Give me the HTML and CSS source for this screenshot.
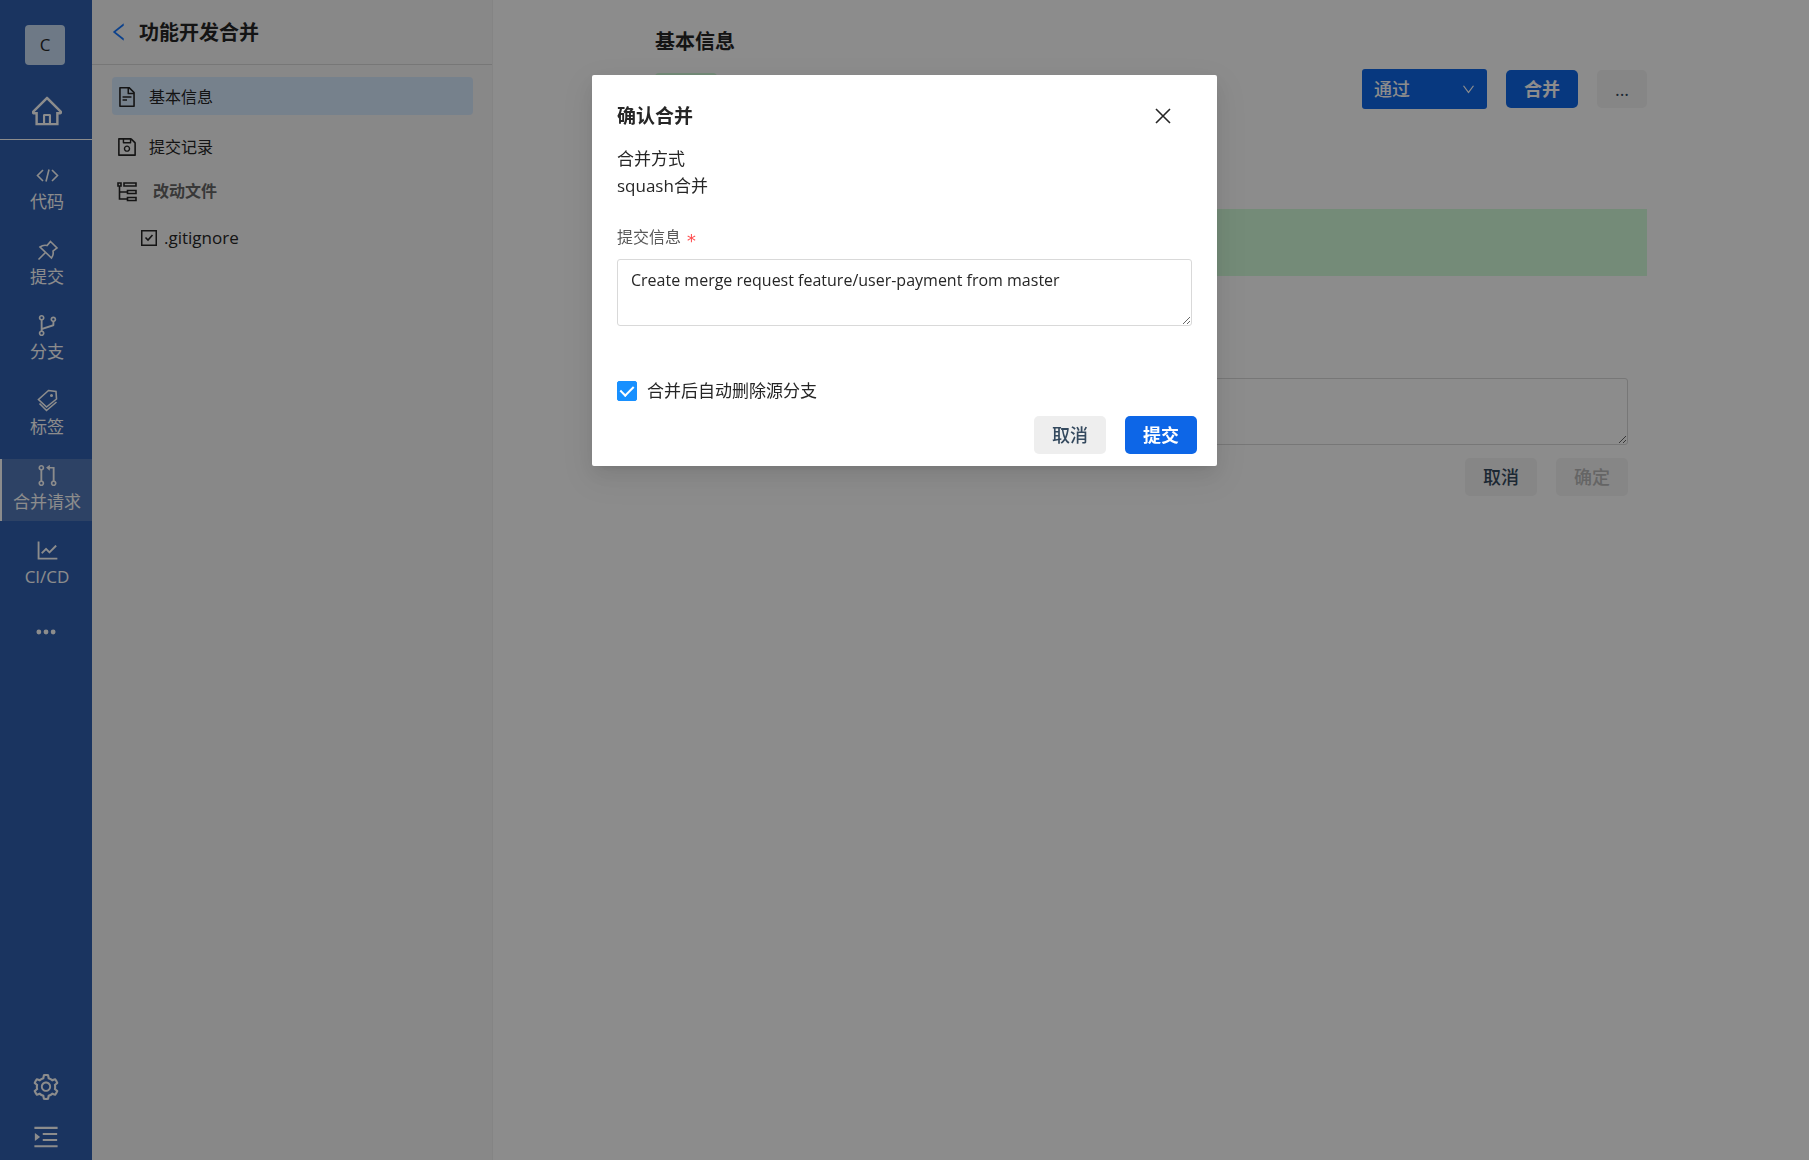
FILE: index.html
```
<!DOCTYPE html>
<html lang="zh-CN">

<head>
    <meta charset="UTF-8" />
    <meta name="viewport" content="width=device-width, initial-scale=1.0" />
    <title>功能开发合并</title>
    <link rel="stylesheet" href="styles.css">
</head>

<body>
    <div class="layout">
        <nav class="sidebar">
            <a href="#" class="avatar">C</a>
            <a href="#" class="home" aria-label="首页">
                <svg class="icon icon-home" viewBox="64 64 896 896"><path d="M946.5 505L560.1 118.8l-25.9-25.9a31.5 31.5 0 00-44.4 0L77.5 505a63.9 63.9 0 00-18.8 46c.4 35.2 29.7 63.3 64.9 63.3h42.5V940h691.8V614.3h43.4c17.1 0 33.2-6.7 45.3-18.8a63.6 63.6 0 0018.7-45.3c0-17-6.7-33.1-18.8-45.2zM568 868H456V664h112v204zm217.9-325.7V868H632V640c0-22.1-17.9-40-40-40H432c-22.1 0-40 17.9-40 40v228H238.1V542.3h-96l370-369.7 23.1 23.1L882 542.3h-96.1z" /></svg>
            </a>
            <div class="nav-list">
                <a href="#" class="nav-item">
                    <svg class="icon icon-nav line" viewBox="0 0 23 23"><path d="M7 6L1.5 11.5 7 17M16 6l5.5 5.5L16 17M13 5.5L10 17.5" /></svg>
                    <span>代码</span>
                </a>
                <a href="#" class="nav-item">
                    <svg class="icon icon-nav line" viewBox="0 0 23 23"><path d="M14.5 2.500l6.500 6.500-4 3c.5 2.500 0 5-1.500 7L4 8c2-1.500 4.500-2 7-1.500zM9.500 13.500l-7 7" /></svg>
                    <span>提交</span>
                </a>
                <a href="#" class="nav-item">
                    <svg class="icon icon-nav" viewBox="64 64 896 896"><path d="M740 161c-61.800 0-112 50.200-112 112 0 50.100 33.100 92.600 78.500 106.900v95.900L320 602.400V318.100c44.200-15 76-56.900 76-106.100 0-61.800-50.200-112-112-112s-112 50.200-112 112c0 49.200 31.800 91 76 106.100V706c-44.200 15-76 56.900-76 106.100 0 61.800 50.200 112 112 112s112-50.200 112-112c0-49.200-31.800-91-76-106.100v-27.800l423.500-138.700a50.520 50.520 0 0034.900-48.200V378.200c42.900-15.800 73.600-57 73.600-105.200 0-61.800-50.200-112-112-112zm-504 51a48.010 48.010 0 0196 0 48.010 48.010 0 01-96 0zm96 600a48.010 48.010 0 01-96 0 48.010 48.010 0 0196 0zm408-491a48.010 48.010 0 010-96 48.010 48.010 0 010 96z" /></svg>
                    <span>分支</span>
                </a>
                <a href="#" class="nav-item">
                    <svg class="icon icon-nav line" viewBox="0 0 23 23"><path d="M12.5 1.500l7.500 1 .5 7.500L10.500 18 2.500 10.500zM3.500 14.500l7 7L20.500 13" /><circle cx="15.5" cy="6.5" r=".7" /></svg>
                    <span>标签</span>
                </a>
                <a href="#" class="nav-item active">
                    <svg class="icon icon-nav" viewBox="64 64 896 896"><path d="M788 705.900V192c0-8.800-7.200-16-16-16H602v-68.800c0-6-7-9.400-11.700-5.700L462.700 202.300a7.140 7.140 0 000 11.300l127.600 100.800c4.700 3.700 11.700.4 11.700-5.700V240h114v465.900c-44.200 15-76 56.900-76 106.100 0 61.800 50.200 112 112 112s112-50.200 112-112c.1-49.200-31.700-91-75.900-106.100zM752 860a48.010 48.010 0 010-96 48.010 48.010 0 010 96zM384 212c0-61.800-50.200-112-112-112s-112 50.200-112 112c0 49.200 31.800 91 76 106.100V706c-44.200 15-76 56.900-76 106.100 0 61.800 50.200 112 112 112s112-50.200 112-112c0-49.200-31.800-91-76-106.100V318.100c44.200-15.100 76-56.900 76-106.100zm-160 0a48.010 48.010 0 0196 0 48.010 48.010 0 01-96 0zm96 600a48.010 48.010 0 01-96 0 48.010 48.010 0 0196 0z" /></svg>
                    <span>合并请求</span>
                </a>
                <a href="#" class="nav-item">
                    <svg class="icon icon-nav" viewBox="64 64 896 896"><path d="M888 792H200V168c0-4.400-3.600-8-8-8h-56c-4.400 0-8 3.600-8 8v688c0 4.400 3.600 8 8 8h752c4.400 0 8-3.600 8-8v-56c0-4.400-3.600-8-8-8zM305.800 637.700c3.100 3.100 8.100 3.100 11.300 0l138.300-137.600L583 628.500c3.100 3.100 8.200 3.100 11.300 0l275.400-275.300c3.100-3.100 3.100-8.200 0-11.300l-39.600-39.600a8.030 8.030 0 00-11.300 0l-230 229.900L461.400 404a8.030 8.030 0 00-11.300 0L266.300 586.700a8.030 8.030 0 000 11.300l39.500 39.700z" /></svg>
                    <span>CI/CD</span>
                </a>
            </div>
            <button type="button" class="icon-btn more" aria-label="更多">
                <svg class="icon icon-more" viewBox="64 64 896 896"><circle cx="192" cy="512" r="108" /><circle cx="512" cy="512" r="108" /><circle cx="832" cy="512" r="108" /></svg>
            </button>
            <div class="sidebar-bottom">
                <button type="button" class="icon-btn" aria-label="设置">
                    <svg class="icon icon-tool" viewBox="64 64 896 896"><path d="M924.800 625.700l-65.500-56c3.100-19 4.700-38.400 4.700-57.800s-1.600-38.800-4.700-57.800l65.500-56a32.030 32.030 0 009.300-35.200l-.9-2.600a443.740 443.740 0 00-79.700-137.900l-1.800-2.100a32.120 32.120 0 00-35.100-9.500l-81.300 28.900c-30-24.600-63.500-44-99.700-57.600l-15.700-85a32.050 32.050 0 00-25.800-25.700l-2.700-.5c-52.100-9.400-106.900-9.400-159 0l-2.700.5a32.050 32.050 0 00-25.800 25.700l-15.800 85.400a351.860 351.860 0 00-99 57.400l-81.900-29.100a32 32 0 00-35.100 9.500l-1.800 2.100a446.020 446.020 0 00-79.700 137.900l-.9 2.600c-4.500 12.500-.8 26.500 9.300 35.200l66.300 56.600c-3.100 18.800-4.600 38-4.600 57.100 0 19.200 1.500 38.400 4.600 57.100L99 625.500a32.030 32.030 0 00-9.300 35.200l.9 2.600c18.100 50.400 44.900 96.900 79.700 137.900l1.800 2.100a32.120 32.120 0 0035.100 9.500l81.900-29.100c29.800 24.500 63.100 43.900 99 57.400l15.800 85.400a32.050 32.050 0 0025.800 25.700l2.700.5a449.400 449.400 0 00159 0l2.700-.5a32.050 32.050 0 0025.800-25.700l15.700-85a350 350 0 0099.700-57.600l81.300 28.900a32 32 0 0035.100-9.500l1.800-2.100c34.800-41.100 61.600-87.500 79.700-137.900l.9-2.600c4.500-12.300.8-26.300-9.300-35zM788.300 465.900c2.500 15.100 3.800 30.600 3.800 46.100s-1.300 31-3.800 46.100l-6.600 40.100 74.700 63.900a370.030 370.030 0 01-42.600 73.600L721 702.800l-31.400 25.800c-23.900 19.600-50.500 35-79.300 45.800l-38.100 14.300-17.900 97a377.500 377.500 0 01-85 0l-17.900-97.200-37.800-14.500c-28.500-10.800-55-26.200-78.700-45.700l-31.400-25.900-93.400 33.200c-17-22.900-31.200-47.600-42.600-73.600l75.500-64.500-6.500-40c-2.400-14.900-3.700-30.300-3.700-45.500 0-15.300 1.200-30.600 3.700-45.500l6.500-40-75.500-64.500c11.300-26.100 25.600-50.700 42.600-73.600l93.400 33.200 31.400-25.900c23.700-19.500 50.200-34.900 78.700-45.700l37.900-14.300 17.900-97.200c28.100-3.200 56.800-3.200 85 0l17.900 97 38.100 14.300c28.700 10.800 55.400 26.200 79.300 45.800l31.400 25.800 92.800-32.900c17 22.900 31.200 47.600 42.600 73.600L781.800 426l6.500 39.900zM512 326c-97.200 0-176 78.800-176 176s78.800 176 176 176 176-78.800 176-176-78.800-176-176-176zm79.200 255.200A111.600 111.600 0 01512 614c-29.900 0-58-11.700-79.200-32.800A111.600 111.600 0 01400 502c0-29.900 11.700-58 32.800-79.200C454 401.600 482.100 390 512 390c29.900 0 58 11.600 79.200 32.800A111.600 111.600 0 01624 502c0 29.900-11.700 58-32.800 79.200z" /></svg>
                </button>
                <button type="button" class="icon-btn" aria-label="展开菜单">
                    <svg class="icon icon-tool" viewBox="64 64 896 896"><path d="M408 442h480c4.400 0 8-3.600 8-8v-56c0-4.400-3.600-8-8-8H408c-4.400 0-8 3.600-8 8v56c0 4.400 3.600 8 8 8zm-8 204c0 4.400 3.600 8 8 8h480c4.400 0 8-3.600 8-8v-56c0-4.400-3.600-8-8-8H408c-4.400 0-8 3.600-8 8v56zm504-486H120c-4.400 0-8 3.600-8 8v56c0 4.400 3.600 8 8 8h784c4.400 0 8-3.600 8-8v-56c0-4.400-3.600-8-8-8zm0 632H120c-4.400 0-8 3.600-8 8v56c0 4.400 3.600 8 8 8h784c4.400 0 8-3.600 8-8v-56c0-4.400-3.600-8-8-8zM142.400 642.100L298.700 519a8.840 8.840 0 000-13.900L142.400 381.900c-5.800-4.600-14.400-.5-14.400 6.900v246.300a8.900 8.900 0 0014.400 7z" /></svg>
                </button>
            </div>
        </nav>

        <aside class="panel">
            <header class="panel-header">
                <a href="#" class="back" aria-label="返回">
                    <svg class="icon icon-menu" viewBox="64 64 896 896"><path d="M724 218.300V141c0-6.700-7.700-10.400-12.900-6.300L260.300 486.800a31.860 31.860 0 000 50.300l450.800 352.100c5.300 4.100 12.900.4 12.900-6.300v-77.300c0-4.900-2.300-9.600-6.100-12.600l-360-281 360-281.100c3.800-3 6.100-7.700 6.100-12.600z" /></svg>
                </a>
                <h1>功能开发合并</h1>
            </header>
            <div class="menu">
                <a href="#" class="menu-item selected">
                    <svg class="icon icon-menu" viewBox="64 64 896 896"><path d="M854.600 288.600L639.400 73.400c-6-6-14.100-9.400-22.600-9.400H192c-17.700 0-32 14.300-32 32v832c0 17.700 14.300 32 32 32h640c17.700 0 32-14.300 32-32V311.300c0-8.500-3.400-16.700-9.400-22.700zM790.200 326H602V137.800L790.200 326zm1.800 562H232V136h302v216a42 42 0 0042 42h216v494zM504 618H320c-4.400 0-8 3.600-8 8v48c0 4.400 3.600 8 8 8h184c4.400 0 8-3.600 8-8v-48c0-4.400-3.600-8-8-8zM312 490v48c0 4.400 3.600 8 8 8h384c4.400 0 8-3.600 8-8v-48c0-4.400-3.600-8-8-8H320c-4.400 0-8 3.600-8 8z" /></svg>
                    基本信息
                </a>
                <a href="#" class="menu-item">
                    <svg class="icon icon-menu" viewBox="64 64 896 896"><path d="M893.300 293.300L730.700 130.700c-7.500-7.500-16.700-13-26.700-16V112H144c-17.700 0-32 14.300-32 32v736c0 17.700 14.300 32 32 32h736c17.700 0 32-14.300 32-32V338.500c0-17-6.700-33.200-18.700-45.200zM384 184h256v104H384V184zm456 656H184V184h136v136c0 17.700 14.300 32 32 32h320c17.700 0 32-14.300 32-32V205.800l136 136V840zM512 442c-79.500 0-144 64.500-144 144s64.500 144 144 144 144-64.500 144-144-64.500-144-144-144zm0 224c-44.200 0-80-35.800-80-80s35.800-80 80-80 80 35.800 80 80-35.800 80-80 80z" /></svg>
                    提交记录
                </a>
            </div>
            <section class="files">
                <h2>
                    <svg class="icon icon-menu line" viewBox="0 0 20 20"><path d="M1 1h3v3H1zM7 1h12v3H7zM10.500 8.500H19v3h-8.500zM10.500 15.500H19v3h-8.500zM2.500 4v13h8M2.500 10h8" /></svg>
                    改动文件
                </h2>
                <a href="#" class="file">
                    <svg class="icon icon-file line" viewBox="0 0 16 16"><path d="M.7.7h14.600v14.600H.7zM4.500 7.500l2.500 2.500L11.500 5" /></svg>
                    .gitignore
                </a>
            </section>
        </aside>

        <main class="content">
            <h2 class="content-title">基本信息</h2>
            <div class="content-head">
                <span class="state"></span>
                <div class="actions">
                    <div class="review">
                        <select aria-label="评审结果">
                            <option>通过</option>
                        </select>
                        <svg class="icon icon-down" viewBox="64 64 896 896"><path d="M884 256h-75c-5.100 0-9.900 2.500-12.900 6.600L512 654.200 227.900 262.600c-3-4.100-7.800-6.600-12.900-6.600h-75c-6.500 0-10.300 7.400-6.500 12.700l352.600 486.100c12.800 17.600 39 17.600 51.700 0l352.600-486.100c3.900-5.300.1-12.700-6.400-12.700z" /></svg>
                    </div>
                    <button type="button" class="btn primary">合并</button>
                    <button type="button" class="btn small">...</button>
                </div>
            </div>
            <div class="banner"></div>
            <form class="comment">
                <textarea aria-label="评论"></textarea>
                <div class="actions">
                    <button type="button" class="btn">取消</button>
                    <button type="submit" class="btn" disabled>确定</button>
                </div>
            </form>
        </main>
    </div>

    <div class="mask">
        <div class="modal" role="dialog" aria-modal="true" aria-labelledby="modalTitle">
            <header class="modal-header">
                <h2 id="modalTitle">确认合并</h2>
                <button type="button" class="close" aria-label="关闭">
                    <svg class="icon icon-close line" viewBox="0 0 16 16"><path d="M1 1l14 14M15 1L1 15" /></svg>
                </button>
            </header>
            <form class="modal-form">
                <p>合并方式</p>
                <p>squash合并</p>
                <label class="field-label" for="commitMessage">提交信息 <span class="required">*</span></label>
                <textarea id="commitMessage">Create merge request feature/user-payment from master</textarea>
                <label class="check">
                    <input type="checkbox" checked />
                    合并后自动删除源分支
                </label>
                <div class="modal-footer">
                    <button type="button" class="btn">取消</button>
                    <button type="submit" class="btn primary">提交</button>
                </div>
            </form>
        </div>
    </div>
</body>

</html>
```

FILE: styles.css
```
* {
    box-sizing: border-box;
}

body {
    margin: 0;
    font-family: "Open Sans", "Noto Sans CJK SC", sans-serif;
    font-size: 17px;
    line-height: 27px;
    color: #262626;
    background: #fff;
}

h1,
h2,
p {
    margin: 0;
}

a {
    color: inherit;
    text-decoration: none;
}

button,
select,
textarea {
    font: inherit;
    color: inherit;
}

button {
    border: none;
    cursor: pointer;
}

.icon {
    display: block;
    flex: none;
    fill: currentColor;
}

.icon.line {
    fill: none;
    stroke: currentColor;
    stroke-width: 1.6;
}

.icon-home {
    width: 30px;
    height: 30px;
}

.icon-nav {
    width: 23px;
    height: 23px;
}

.icon-tool {
    width: 26px;
    height: 26px;
}

.icon-more,
.icon-menu {
    width: 20px;
    height: 20px;
}

.icon-file,
.icon-close {
    width: 16px;
    height: 16px;
}

.icon-down {
    width: 13px;
    height: 13px;
}

.layout {
    display: flex;
    min-height: 100vh;
}

/* 左侧导航 */
.sidebar {
    display: flex;
    flex-direction: column;
    width: 92px;
    padding: 25px 0 10px;
    background: #3160b0;
    color: #fff;
}

.avatar {
    width: 40px;
    height: 40px;
    margin: 0 25px;
    line-height: 40px;
    text-align: center;
    background: #c9ddf5;
    color: #262626;
    border-radius: 4px;
}

.home {
    display: flex;
    justify-content: center;
    padding: 31px 0 13px 2px;
    border-bottom: 1px solid #fff;
}

.nav-list {
    display: flex;
    flex-direction: column;
    gap: 13px;
    padding-top: 19px;
}

.nav-item {
    display: flex;
    flex-direction: column;
    align-items: center;
    gap: 1px;
    height: 62px;
    padding: 5px 0;
    border-left: 2px solid transparent;
}

.nav-item.active {
    background: #5278b9;
    border-color: #fff;
}

.icon-btn {
    padding: 0;
    background: none;
    color: inherit;
}

.more {
    margin: 26px 36px 0;
}

.sidebar-bottom {
    display: flex;
    flex-direction: column;
    align-items: center;
    gap: 24px;
    margin-top: auto;
}

/* 合并请求菜单 */
.panel {
    width: 401px;
    background: #f7f7f7;
    border-right: 1px solid #f0f0f0;
}

.panel-header {
    display: flex;
    align-items: center;
    gap: 10px;
    height: 65px;
    padding-left: 17px;
    border-bottom: 1px solid #d9d9d9;
}

.panel-header h1,
.content-title {
    font-size: 20px;
    font-weight: 700;
}

.back {
    color: #1677ff;
}

.menu {
    display: flex;
    flex-direction: column;
    gap: 12px;
    padding: 12px 19px 0 20px;
}

.menu-item {
    display: flex;
    align-items: center;
    gap: 12px;
    height: 38px;
    padding: 2px 5px 0;
    font-size: 16px;
    border-radius: 4px;
}

.menu-item.selected {
    background: #d8ebff;
}

.files {
    padding: 13px 25px;
}

.files h2 {
    display: flex;
    align-items: center;
    gap: 16px;
    font-size: 16px;
    color: #666;
}

.files h2 .icon {
    color: #262626;
}

.file {
    display: flex;
    align-items: center;
    gap: 7px;
    padding: 19px 24px;
}

/* 主内容 */
.content {
    flex: 1;
    padding: 28px 162px;
}

.content-head {
    display: flex;
    justify-content: space-between;
    align-items: flex-start;
    padding-top: 14px;
}

.state {
    width: 62px;
    height: 30px;
    margin-top: 4px;
    background: #d3fdda;
    border-radius: 4px;
}

.actions {
    display: flex;
    align-items: center;
    justify-content: flex-end;
    gap: 19px;
}

.btn {
    width: 72px;
    height: 38px;
    padding: 0;
    background: #f4f4f4;
    color: #34495e;
    font-size: 18px;
    font-weight: 500;
    border-radius: 5px;
}

.btn.primary {
    background: #0d66e7;
    color: #fff;
    font-weight: 700;
}

.btn.small {
    width: 50px;
}

.btn:disabled {
    color: #b8b8b8;
    cursor: default;
}

.review {
    display: grid;
    align-items: center;
    width: 125px;
    height: 40px;
    color: #fff;
}

.review select,
.review .icon {
    grid-area: 1 / 1;
}

.review select {
    appearance: none;
    height: 40px;
    padding: 0 12px;
    font-size: 18px;
    font-weight: 500;
    background: #0d66e7;
    border: none;
    border-radius: 3px;
}

.review .icon {
    justify-self: end;
    margin-right: 12px;
    pointer-events: none;
}

.banner {
    height: 67px;
    margin-top: 100px;
    background: #d3fdda;
}

.comment {
    margin-top: 102px;
    padding: 0 19px;
}

textarea {
    display: block;
    width: 100%;
    height: 67px;
    padding: 7px 13px;
    font-size: 16px;
    background: #fff;
    border: 1px solid #d9d9d9;
    border-radius: 3px;
    outline: none;
}

.comment .actions {
    margin-top: 13px;
}

/* 弹窗 */
.mask {
    position: fixed;
    inset: 0;
    background: rgba(0, 0, 0, 0.45);
}

.modal {
    width: 625px;
    max-width: 100%;
    margin: 75px auto 0;
    padding: 25px 25px 12px;
    background: #fff;
    border-radius: 2px;
    box-shadow: 0 4px 8px -5px rgba(0, 0, 0, 0.12), 0 8px 20px rgba(0, 0, 0, 0.08), 0 11px 35px 10px rgba(0, 0, 0, 0.05);
}

.modal-header {
    display: flex;
    align-items: center;
    justify-content: space-between;
    height: 32px;
    margin-bottom: 13px;
}

.modal-header h2 {
    font-size: 19px;
    font-weight: 700;
}

.close {
    padding: 8px;
    margin-right: 13px;
    background: none;
}

.field-label {
    display: flex;
    gap: 5px;
    height: 27px;
    margin: 25px 0 8px;
    font-size: 16px;
    color: #595959;
}

.required {
    padding-top: 3px;
    font-family: "DejaVu Sans Mono", monospace;
    font-size: 18px;
    color: #ff4d4f;
}

.check {
    display: flex;
    align-items: center;
    gap: 10px;
    margin-top: 51px;
}

.check input {
    appearance: none;
    display: grid;
    place-items: center;
    width: 20px;
    height: 20px;
    margin: 0;
    border: 1px solid #d9d9d9;
    border-radius: 2px;
}

.check input:checked {
    background: #1890ff;
    border-color: #1890ff;
}

.check input:checked::after {
    content: "";
    width: 6px;
    height: 11px;
    margin-bottom: 3px;
    border: solid #fff;
    border-width: 0 2px 2px 0;
    transform: rotate(45deg);
}

.modal-footer {
    display: flex;
    justify-content: flex-end;
    gap: 19px;
    margin: 12px -5px 0 0;
}

.modal-footer .btn:not(.primary) {
    background: #eee;
}
```
